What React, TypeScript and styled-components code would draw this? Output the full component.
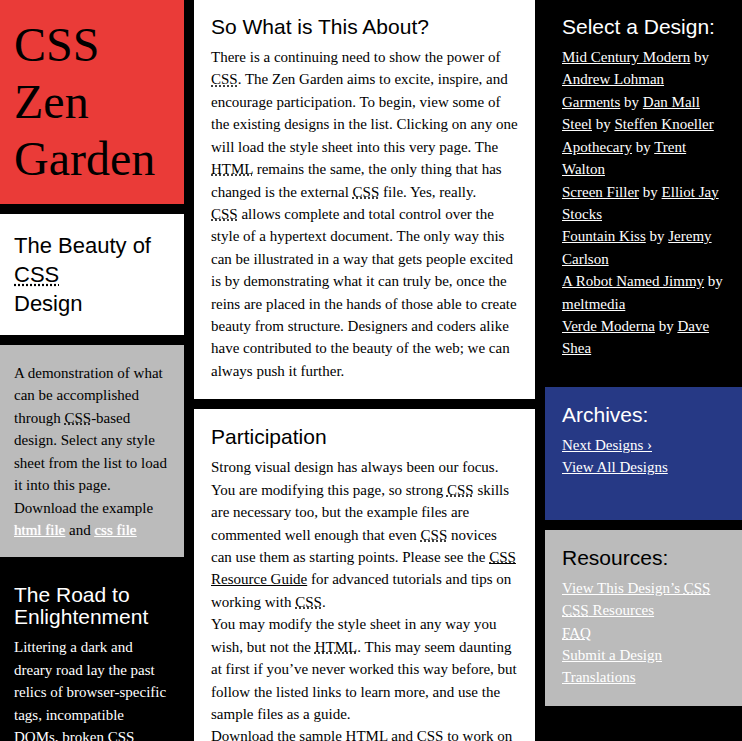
import React from "react";
import styled, { createGlobalStyle } from "styled-components";

const GlobalStyle = createGlobalStyle`
  *, *::before, *::after { box-sizing: border-box; }
  html { scrollbar-width: none; background: #000; }
  body { margin: 0; }
`;

const Page = styled.div`
  display: grid;
  grid-template-columns: 184fr 341fr 197fr;
  column-gap: 10px;
  align-items: start;
  background: #000;
  color: #000;
  font: 15px/1.495 "Liberation Serif", "Times New Roman", serif;
`;

const Column = styled.div`
  display: flex;
  flex-direction: column;
  gap: 10px;
  min-width: 0;
`;

type Tone = "red" | "white" | "gray" | "black" | "blue";

const tones: Record<Tone, string> = {
  red: "background: #ea3b38; color: #000;",
  white: "background: #fff; color: #000;",
  gray: "background: #bbb; color: #000;",
  black: "background: #000; color: #fff;",
  blue: "background: #263985; color: #fff;",
};

const Panel = styled.section<{ $tone: Tone; $pad: string }>`
  ${(p) => tones[p.$tone]}
  padding: ${(p) => p.$pad};
`;

const SiteTitle = styled.h1`
  margin: 0;
  font-size: 48px;
  line-height: 57px;
  font-weight: 400;
`;

const Tagline = styled.h2`
  margin: 0;
  font: 400 22px/29px "Liberation Sans", Arial, sans-serif;
`;

const Heading = styled.h3`
  margin: 0 0 8px;
  font: 400 21px/22px "Liberation Sans", Arial, sans-serif;
`;

const Text = styled.p`
  margin: 0;
`;

const Abbr = styled.abbr`
  text-decoration: underline dotted;
`;

const Link = styled.a`
  color: inherit;
  text-decoration: underline;
`;

const LightLink = styled(Link)`
  color: #fff;
`;

const FileLink = styled(LightLink)`
  text-shadow: 0 0 1px #fff;
`;

const List = styled.ul`
  margin: 0;
  padding: 0;
  list-style: none;
`;

const designs = [
  ["Mid Century Modern", "Andrew Lohman"],
  ["Garments", "Dan Mall"],
  ["Steel", "Steffen Knoeller"],
  ["Apothecary", "Trent Walton"],
  ["Screen Filler", "Elliot Jay Stocks"],
  ["Fountain Kiss", "Jeremy Carlson"],
  ["A Robot Named Jimmy", "meltmedia"],
  ["Verde Moderna", "Dave Shea"],
];

const Css = () => <Abbr title="Cascading Style Sheets">CSS</Abbr>;
const Html = () => <Abbr title="HyperText Markup Language">HTML</Abbr>;

const LinkItem = ({ children }: { children: React.ReactNode }) => (
  <li>
    <LightLink href="#">{children}</LightLink>
  </li>
);

export default function App() {
  return (
    <>
      <GlobalStyle />
      <Page>
        <Column as="header">
          <Panel $tone="red" $pad="16px 14px 17px">
            <SiteTitle>CSS Zen Garden</SiteTitle>
          </Panel>
          <Panel $tone="white" $pad="17px 14px">
            <Tagline>
              The Beauty of <Css />
              <br />
              Design
            </Tagline>
          </Panel>
          <Panel $tone="gray" $pad="17px 14px 16px">
            <Text>
              A demonstration of what can be accomplished through <Css />
              -based design. Select any style sheet from the list to load it into this page.
            </Text>
            <Text>
              Download the example <FileLink href="#">html file</FileLink> and{" "}
              <FileLink href="#">css file</FileLink>
            </Text>
          </Panel>
          <Panel $tone="black" $pad="17px 14px">
            <Heading>The Road to Enlightenment</Heading>
            <Text>
              Littering a dark and dreary road lay the past relics of browser-specific tags,
              incompatible <Abbr title="Document Object Model">DOM</Abbr>s, broken <Css /> support,
              and abandoned browsers.
            </Text>
          </Panel>
        </Column>

        <Column as="main">
          <Panel $tone="white" $pad="16px 17px 17px">
            <Heading>So What is This About?</Heading>
            <Text>
              There is a continuing need to show the power of <Css />. The Zen Garden aims to
              excite, inspire, and encourage participation. To begin, view some of the existing
              designs in the list. Clicking on any one will load the style sheet into this very
              page. The <Html /> remains the same, the only thing that has changed is the external{" "}
              <Css /> file. Yes, really.
            </Text>
            <Text>
              <Css /> allows complete and total control over the style of a hypertext document. The
              only way this can be illustrated in a way that gets people excited is by demonstrating
              what it can truly be, once the reins are placed in the hands of those able to create
              beauty from structure. Designers and coders alike have contributed to the beauty of
              the web; we can always push it further.
            </Text>
          </Panel>
          <Panel $tone="white" $pad="17px">
            <Heading>Participation</Heading>
            <Text>
              Strong visual design has always been our focus. You are modifying this page, so strong{" "}
              <Css /> skills are necessary too, but the example files are commented well enough that
              even <Css /> novices can use them as starting points. Please see the{" "}
              <Link href="#">
                <Css /> Resource Guide
              </Link>{" "}
              for advanced tutorials and tips on working with <Css />.
            </Text>
            <Text>
              You may modify the style sheet in any way you wish, but not the <Html />. This may
              seem daunting at first if you’ve never worked this way before, but follow the listed
              links to learn more, and use the sample files as a guide.
            </Text>
            <Text>
              Download the sample <Html /> and <Css /> to work on a copy locally.
            </Text>
          </Panel>
        </Column>

        <Column as="aside">
          <Panel $tone="black" $pad="16px 17px 17px">
            <Heading>Select a Design:</Heading>
            <List>
              {designs.map(([name, author]) => (
                <li key={name}>
                  <LightLink href="#">{name}</LightLink> by <LightLink href="#">{author}</LightLink>
                </li>
              ))}
            </List>
          </Panel>
          <Panel $tone="blue" $pad="17px 17px 41px">
            <Heading>Archives:</Heading>
            <List>
              <LinkItem>Next Designs ›</LinkItem>
              <LinkItem>View All Designs</LinkItem>
            </List>
          </Panel>
          <Panel $tone="gray" $pad="17px">
            <Heading>Resources:</Heading>
            <List>
              <LinkItem>
                View This Design’s <Css />
              </LinkItem>
              <LinkItem>
                <Css /> Resources
              </LinkItem>
              <LinkItem>
                <Abbr title="Frequently Asked Questions">FAQ</Abbr>
              </LinkItem>
              <LinkItem>Submit a Design</LinkItem>
              <LinkItem>Translations</LinkItem>
            </List>
          </Panel>
        </Column>
      </Page>
    </>
  );
}
